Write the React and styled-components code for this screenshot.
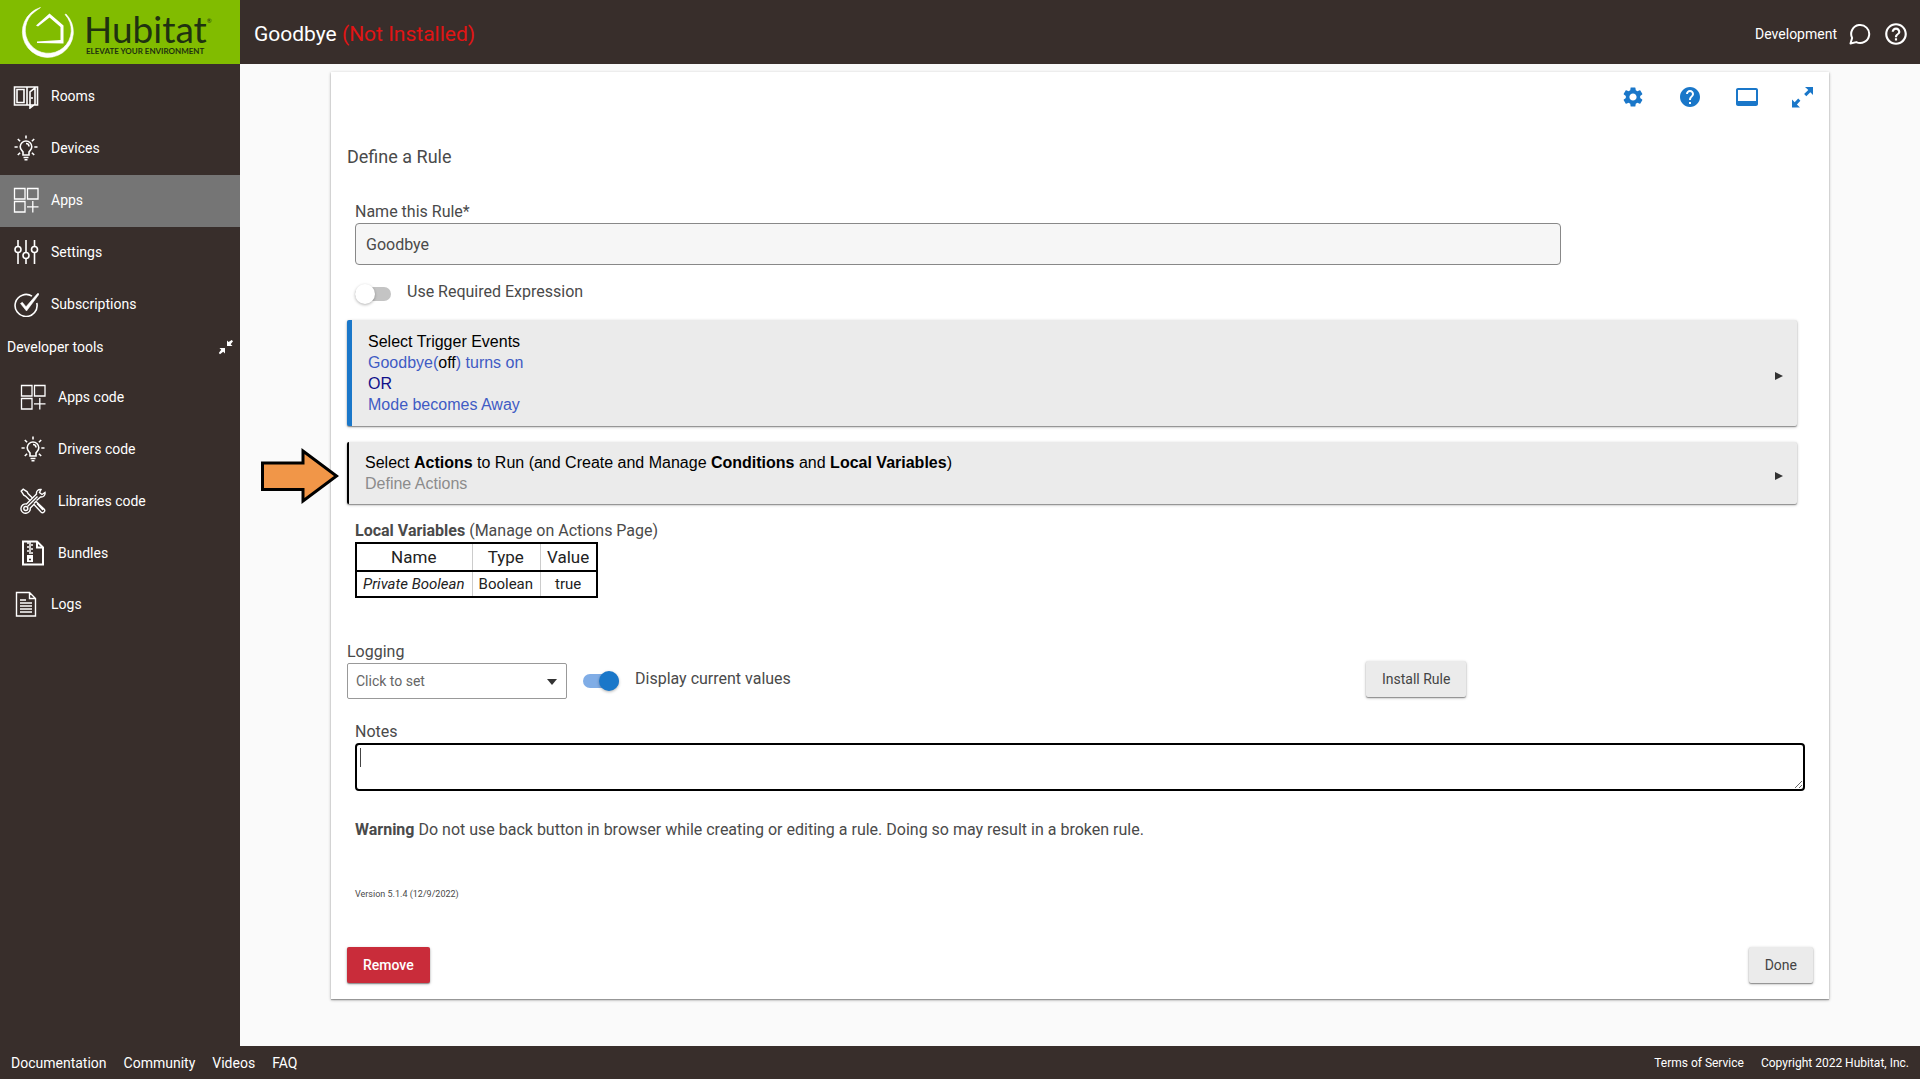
import { useState } from 'react'
import styled, { createGlobalStyle } from 'styled-components'
import { MdSettings, MdHelp, MdHelpOutline, MdVideoLabel } from 'react-icons/md'

const GlobalStyle = createGlobalStyle`
  * {
    box-sizing: border-box;
  }
  body {
    margin: 0;
    background: #fafafa;
    color: #4a4a4a;
    font-family: Roboto, 'Liberation Sans', sans-serif;
    font-size: 16px;
    line-height: 20px;
  }
  button, input, select, textarea {
    font-family: inherit;
    color: inherit;
  }
`

const Page = styled.div`
  display: flex;
  flex-direction: column;
  min-height: 100vh;
`

const Header = styled.header`
  display: flex;
  height: 64px;
  background: #382e2b;
  color: #fff;
`

const Logo = styled.a`
  display: flex;
  align-items: center;
  gap: 8px;
  width: 240px;
  padding-left: 20px;
  background: #81bc00;
  color: #1f3210;
  font-family: Lato, sans-serif;
  text-decoration: none;
`

const LogoText = styled.span`
  display: flex;
  flex-direction: column;
`

const LogoName = styled.span`
  font-size: 37px;
  line-height: 37px;
`

const LogoTagline = styled.span`
  padding-left: 2px;
  font-size: 8px;
  font-weight: 700;
  line-height: 8px;
  white-space: nowrap;
`

const Trademark = styled.sup`
  font-size: 6px;
  line-height: 0;
  vertical-align: 20px;
`

const HeaderBar = styled.div`
  display: flex;
  flex: 1;
  align-items: center;
  justify-content: space-between;
  padding: 3px 11px 0 14px;
`

const Title = styled.h1`
  margin: 0;
  font-size: 21px;
  font-weight: 400;
  line-height: 24px;
`

const NotInstalled = styled.span`
  color: #e11414;
`

const HeaderTools = styled.div`
  display: flex;
  align-items: center;
  gap: 12px;
  font-size: 14px;
`

const IconButton = styled.button`
  display: flex;
  padding: 0;
  border: 0;
  background: none;
  color: ${props => props.$color || '#fff'};
  cursor: pointer;
`

const Body = styled.div`
  display: flex;
  flex: 1;
`

const Sidebar = styled.nav`
  width: 240px;
  padding-top: 7px;
  background: #382e2b;
  color: #fff;
`

const NavItem = styled.a`
  display: flex;
  align-items: center;
  gap: 12px;
  height: 52px;
  padding: ${props => (props.$nested ? '0 0 0 20px' : '0 0 2px 13px')};
  background: ${props => (props.$active ? '#757575' : 'none')};
  color: #fff;
  font-size: 14px;
  text-decoration: none;
`

const NavGroup = styled.button`
  display: flex;
  align-items: center;
  justify-content: space-between;
  width: 100%;
  height: 40px;
  padding: 0 6px 8px 7px;
  border: 0;
  background: none;
  font-size: 14px;
`

const Main = styled.main`
  flex: 1;
  padding: 8px 91px 0;
`

const Card = styled.section`
  position: relative;
  padding: 12px 16px 16px;
  background: #fff;
  box-shadow: 0 1px 3px rgba(0, 0, 0, 0.3), 0 1px 1px rgba(0, 0, 0, 0.25);
`

const Arrow = styled.svg`
  position: absolute;
  right: calc(100% + 9px);
  top: 5px;
`

const CardTools = styled.div`
  display: flex;
  justify-content: flex-end;
  align-items: center;
  gap: 33px;
  height: 26px;
`

const Heading = styled.h2`
  margin: 35px 0 32px;
  font-size: 18px;
  font-weight: 400;
  line-height: 24px;
`

const Inset = styled.div`
  padding: 0 8px;
`

const Label = styled.label`
  display: block;
  line-height: 22px;
`

const NameField = styled.div`
  width: calc(100% * 10 / 12);
  padding: 0 8px;
`

const TextInput = styled.input`
  display: block;
  width: 100%;
  height: 42px;
  padding: 0 10px;
  border: 1px solid #888;
  border-radius: 4px;
  background: #f6f6f6;
  font-size: 16px;
`

const RequiredRow = styled.div`
  padding: 17px 8px 18px;
`

const SwitchLabel = styled.label`
  display: flex;
  align-items: center;
  gap: 16px;
`

const Switch = styled.input`
  appearance: none;
  position: relative;
  width: 36px;
  height: 14px;
  margin: 4px 0 0;
  border-radius: 7px;
  background: ${props => (props.checked ? '#80ade6' : '#c4c4c4')};
  &::after {
    content: '';
    position: absolute;
    top: -3px;
    left: ${props => (props.checked ? '16px' : '0')};
    width: 20px;
    height: 20px;
    border-radius: 50%;
    background: ${props => (props.checked ? '#1a77c9' : '#fff')};
    box-shadow: 0 1px 3px rgba(0, 0, 0, 0.3);
  }
`

const Panel = styled.button`
  position: relative;
  display: flex;
  align-items: center;
  justify-content: space-between;
  width: calc(100% - 16px);
  margin-bottom: 16px;
  padding: ${props => (props.$filled ? '11px 13px 11px 16px' : '10px 13px 10px 16px')};
  border: 0;
  border-left: ${props => (props.$filled ? '5px solid #1a77c9' : '2px solid #000')};
  border-radius: 2px;
  background: #ebebeb;
  box-shadow: 0 1px 3px rgba(0, 0, 0, 0.3), 0 1px 1px rgba(0, 0, 0, 0.3);
  color: #000;
  font-family: 'Liberation Sans', Arial, sans-serif;
  font-size: 16px;
  line-height: 21px;
  text-align: left;
  cursor: pointer;
`

const PanelMark = styled.svg`
  margin-top: 6px;
`

const Tint = styled.span`
  color: ${props => props.$color};
`

const VariableTable = styled.table`
  border: 2px solid #000;
  border-collapse: collapse;
  color: #222;
  text-align: center;
  th {
    height: 28px;
    padding: 0 7px 0 6px;
    border-bottom: 2px solid #000;
    font-size: 17px;
    font-weight: 400;
  }
  td {
    height: 26px;
    padding: 0 7px 0 6px;
    font-size: 15px;
  }
  th + th, td + td {
    border-left: 1px solid #ccc;
  }
`

const OptionsRow = styled.div`
  display: grid;
  grid-template-columns: 220px 1fr 447px;
  align-items: end;
  column-gap: 16px;
  margin: 43px 0 22px;
`

const SelectBox = styled.div`
  position: relative;
  svg {
    position: absolute;
    right: 10px;
    top: 16px;
    pointer-events: none;
  }
`

const Select = styled.select`
  appearance: none;
  display: block;
  width: 100%;
  height: 36px;
  padding: 0 8px;
  border: 1px solid #999;
  border-radius: 2px;
  background: #fff;
  color: #666;
  font-size: 14px;
`

const OptionCell = styled.div`
  display: flex;
  align-items: center;
  height: 38px;
  margin-bottom: 1px;
`

const Button = styled.button`
  height: 36px;
  padding: 0 16px;
  border: 0;
  border-radius: 2px;
  background: ${props => (props.$danger ? '#c92c3a' : '#ebebeb')};
  box-shadow: 0 1px 3px rgba(0, 0, 0, 0.3), 0 1px 1px rgba(0, 0, 0, 0.3);
  color: ${props => (props.$danger ? '#fff' : '#444')};
  font-size: 14px;
  font-weight: ${props => (props.$danger ? 500 : 400)};
  cursor: pointer;
`

const NotesBox = styled.div`
  position: relative;
`

const Notes = styled.textarea`
  display: block;
  width: 100%;
  height: 48px;
  padding: 3px;
  border: 2px solid #000;
  border-radius: 4px;
  outline: 0;
  background: #fff;
  caret-color: transparent;
  font-size: 16px;
`

const Caret = styled.span`
  position: absolute;
  top: 5px;
  left: 5px;
  width: 1px;
  height: 19px;
  background: #444;
`

const Warning = styled.p`
  margin: 29px 0 44px;
`

const Version = styled.p`
  margin: 0;
  font-size: 9px;
`

const Actions = styled.div`
  display: flex;
  justify-content: space-between;
  margin-top: 43px;
`

const Footer = styled.footer`
  display: flex;
  justify-content: space-between;
  align-items: center;
  height: 33px;
  padding: 0 11px;
  background: #382e2b;
`

const FooterLinks = styled.div`
  display: flex;
  gap: 17px;
  font-size: ${props => (props.$small ? '12px' : '14px')};
  color: #fff;
  a {
    color: inherit;
    text-decoration: none;
  }
`

function Icon({ children, size = 26, width = 1.6 }) {
  return (
    <svg width={size} height={size} viewBox="0 0 26 26" fill="none" stroke="currentColor" strokeWidth={width} aria-hidden="true">
      {children}
    </svg>
  )
}

function LogoMark() {
  return (
    <svg width="56" height="56" viewBox="0 0 56 56" fill="#fff" aria-hidden="true">
      <path d="M20.500 3.500 A25.500 25.500 0 1 0 46 10 L45 10.500 A23 23 0 1 1 15 7.500 Z" stroke="#fff" strokeWidth="0.600" />
      <path d="M16 21.500 L29.500 9.500 L43.500 21.500 V39.500 L17 39 V37.500 L40.500 36 V23 L29.500 13.500 L18 22.500 Z" />
    </svg>
  )
}

function RoomsIcon() {
  return (
    <Icon>
      <path d="M1.500 4h23v18h-23zM4 6.500h7v13H4zM14 4v18M17 22V9l5-4v16l-5 4z" />
      <path d="M19 14v2" />
    </Icon>
  )
}

function BulbIcon() {
  return (
    <Icon>
      <path d="M10 20v-3c-1-1.500-2.800-2.700-2.800-5.200a5.800 5.800 0 0 1 11.600 0c0 2.500-1.800 3.700-2.800 5.200v3zM10.500 22.500h5M11.500 24.800h3M13 8.500a3 3 0 0 1 3 3" />
      <path d="M13 .5v3M1.500 12h3.200M21.300 12h3.200M4.800 4l2.300 2.300M21.200 4l-2.300 2.300M4.800 20l2.300-2.300M21.200 20l-2.300-2.300" />
    </Icon>
  )
}

function AppsIcon() {
  return (
    <Icon width={1.3}>
      <path d="M1.500 1.500h10.500v10.500H1.500zM14.500 1.500H25v10.500H14.500zM1.500 14.500h10.500V25H1.500zM19.800 14v11.500M14 19.800h11.500" />
    </Icon>
  )
}

function SettingsIcon() {
  return (
    <Icon>
      <path d="M5 1v6.500M5 13.500V25M13 1v12.500M13 19.500V25M21.500 1v6.500M21.500 13.500V25" />
      <circle cx="5" cy="10.500" r="3" />
      <circle cx="13" cy="16.500" r="3" />
      <circle cx="21.500" cy="10.500" r="3" />
    </Icon>
  )
}

function CheckIcon() {
  return (
    <Icon>
      <path d="M19 5.200A11 11 0 1 0 23.800 12" />
      <path d="M7.500 12.500l1.800-1.200 3.700 4.500L24.500 2.500l1.800.3L13.500 20z" fill="currentColor" strokeWidth="0.600" />
    </Icon>
  )
}

function ToolsIcon() {
  return (
    <Icon width={1.4}>
      <path d="M16.500 12.500l4-3.500c3 .5 5-2 4.500-4.500l-3 2-2.500-2 1.500-3c-3-.5-5 2-4.500 4.500L6.500 16a4.700 4.700 0 1 0 3.800 4l4-4" />
      <circle cx="5.800" cy="20.500" r="2" />
      <path d="M10 12.500L5.500 8 3.800 7.200 1.200 3.200 3.200 1.200l4 2.600L8 5.500l4.500 4.500M14 15.500l2-2 8 7.500c2 2-1 5-3 3l-7-7.500M17 15.500l6 6.500M7.500 18.500l10-10" />
    </Icon>
  )
}

function BundleIcon() {
  return (
    <Icon width={2}>
      <path d="M3 1.500h14l6 6V24.500H3z" />
      <path d="M17 1.500v6h6" />
      <path d="M7 3h4M9 5h4M7 7h4M9 9h4M7 11h4M9 13h4" strokeWidth="1.300" />
      <path d="M7 15h6v7H7z" fill="currentColor" stroke="none" />
      <path d="M9 19.500h2" stroke="#382e2b" strokeWidth="1.500" />
    </Icon>
  )
}

function LogsIcon() {
  return (
    <Icon width={1.4}>
      <path d="M3.500 1.500h13l6 6V25h-19zM16.500 1.500v6h6M7 9h6M7 12h12M7 15h12M7 18h12M7 21h12" />
    </Icon>
  )
}

function CollapseIcon() {
  return (
    <svg width="16" height="16" viewBox="0 0 16 16" fill="#fff" aria-hidden="true">
      <path d="M9 1.500l1.600 1.600L13.700 1 15 2.300l-2.300 3 1.800 1.700H9zM7 9v5.500l-1.800-1.700L2 15.200.8 14 3.200 10.800 1.500 9z" />
    </svg>
  )
}

function ExpandIcon() {
  return (
    <svg width="21" height="21" viewBox="0 0 21 21" fill="currentColor" aria-hidden="true">
      <path d="M13 0h8v8l-2.700-2.700-4 4-2.200-2.200 4.200-4.100zM0 20.500v-8l2.700 2.700 3.500-3.600 2.200 2.200-3.500 3.700L8 20.500z" />
    </svg>
  )
}

function ChatIcon() {
  return (
    <svg width="22" height="22" viewBox="0 0 22 22" fill="none" stroke="#fff" strokeWidth="2" strokeLinejoin="round" aria-hidden="true">
      <path d="M1.500 20.500l1.600-5.600a9 9 0 1 1 4.200 4.200z" />
    </svg>
  )
}

const mainLinks = [
  { name: 'Rooms', icon: <RoomsIcon /> },
  { name: 'Devices', icon: <BulbIcon /> },
  { name: 'Apps', icon: <AppsIcon />, active: true },
  { name: 'Settings', icon: <SettingsIcon /> },
  { name: 'Subscriptions', icon: <CheckIcon /> }
]

const developerLinks = [
  { name: 'Apps code', icon: <AppsIcon /> },
  { name: 'Drivers code', icon: <BulbIcon /> },
  { name: 'Libraries code', icon: <ToolsIcon /> },
  { name: 'Bundles', icon: <BundleIcon /> }
]

function Navigation() {
  const [open, setOpen] = useState(true)

  return (
    <Sidebar>
      {mainLinks.map(link => (
        <NavItem key={link.name} href="#" $active={link.active}>{link.icon}{link.name}</NavItem>
      ))}
      <NavGroup onClick={() => setOpen(!open)}>
        Developer tools
        <CollapseIcon />
      </NavGroup>
      {open && developerLinks.map(link => (
        <NavItem key={link.name} href="#" $nested>{link.icon}{link.name}</NavItem>
      ))}
      <NavItem href="#"><LogsIcon />Logs</NavItem>
    </Sidebar>
  )
}

function PanelCaret() {
  return (
    <PanelMark width="10" height="10" viewBox="0 0 10 10" fill="#333" aria-hidden="true">
      <path d="M1 1l8 4-8 4z" />
    </PanelMark>
  )
}

function RuleForm() {
  const [data, setData] = useState({
    name: 'Goodbye',
    required: false,
    logging: '',
    display: true,
    notes: ''
  })

  return (
    <Card>
      <CardTools>
        <IconButton $color="#1a77c9" aria-label="Settings"><MdSettings size={24} /></IconButton>
        <IconButton $color="#1a77c9" aria-label="Help"><MdHelp size={24} /></IconButton>
        <IconButton $color="#1a77c9" aria-label="Display"><MdVideoLabel size={24} /></IconButton>
        <IconButton $color="#1a77c9" aria-label="Expand"><ExpandIcon /></IconButton>
      </CardTools>
      <Heading>Define a Rule</Heading>
      <NameField>
        <Label htmlFor="name">Name this Rule*</Label>
        <TextInput id="name" value={data.name} onChange={(e) => setData({...data, name: e.target.value})} />
      </NameField>
      <RequiredRow>
        <SwitchLabel>
          <Switch type="checkbox" checked={data.required} onChange={(e) => setData({...data, required: e.target.checked})} />
          Use Required Expression
        </SwitchLabel>
      </RequiredRow>
      <Panel $filled>
        <span>
          Select Trigger Events<br />
          <Tint $color="#3f5bc4">Goodbye(<Tint $color="#000">off</Tint>) turns on</Tint><br />
          <Tint $color="#10108a">OR</Tint><br />
          <Tint $color="#3f5bc4">Mode becomes Away</Tint>
        </span>
        <PanelCaret />
      </Panel>
      <Panel>
        <Arrow width="80" height="58" viewBox="0 0 80 58" aria-hidden="true">
          <path d="M2.500 16H43V4L76.500 29 43 54V42.500H2.500z" fill="#f19648" stroke="#000" strokeWidth="3" />
        </Arrow>
        <span>
          Select <b>Actions</b> to Run (and Create and Manage <b>Conditions</b> and <b>Local Variables</b>)<br />
          <Tint $color="#8c8c8c">Define Actions</Tint>
        </span>
        <PanelCaret />
      </Panel>
      <Inset>
        <Label as="div"><b>Local Variables</b> (Manage on Actions Page)</Label>
        <VariableTable>
          <thead>
            <tr><th>Name</th><th>Type</th><th>Value</th></tr>
          </thead>
          <tbody>
            <tr><td><i>Private Boolean</i></td><td>Boolean</td><td>true</td></tr>
          </tbody>
        </VariableTable>
      </Inset>
      <OptionsRow>
        <div>
          <Label htmlFor="logging">Logging</Label>
          <SelectBox>
            <Select id="logging" value={data.logging} onChange={(e) => setData({...data, logging: e.target.value})}>
              <option value="">Click to set</option>
            </Select>
            <svg width="10" height="6" viewBox="0 0 10 6" fill="#333" aria-hidden="true"><path d="M0 0h10L5 6z" /></svg>
          </SelectBox>
        </div>
        <OptionCell>
          <SwitchLabel>
            <Switch type="checkbox" checked={data.display} onChange={(e) => setData({...data, display: e.target.checked})} />
            Display current values
          </SwitchLabel>
        </OptionCell>
        <OptionCell><Button>Install Rule</Button></OptionCell>
      </OptionsRow>
      <Inset>
        <Label htmlFor="notes">Notes</Label>
        <NotesBox>
          <Notes id="notes" value={data.notes} onChange={(e) => setData({...data, notes: e.target.value})} />
          <Caret />
        </NotesBox>
        <Warning><b>Warning</b> Do not use back button in browser while creating or editing a rule. Doing so may result in a broken rule.</Warning>
        <Version>Version 5.1.4 (12/9/2022)</Version>
      </Inset>
      <Actions>
        <Button $danger>Remove</Button>
        <Button>Done</Button>
      </Actions>
    </Card>
  )
}

export default function App() {
  return (
    <Page>
      <GlobalStyle />
      <Header>
        <Logo href="#">
          <LogoMark />
          <LogoText>
            <LogoName>Hubitat<Trademark>®</Trademark></LogoName>
            <LogoTagline>ELEVATE YOUR ENVIRONMENT</LogoTagline>
          </LogoText>
        </Logo>
        <HeaderBar>
          <Title>Goodbye <NotInstalled>(Not Installed)</NotInstalled></Title>
          <HeaderTools>
            Development
            <IconButton aria-label="Messages"><ChatIcon /></IconButton>
            <IconButton aria-label="Help"><MdHelpOutline size={26} /></IconButton>
          </HeaderTools>
        </HeaderBar>
      </Header>
      <Body>
        <Navigation />
        <Main>
          <RuleForm />
        </Main>
      </Body>
      <Footer>
        <FooterLinks>
          <a href="#">Documentation</a>
          <a href="#">Community</a>
          <a href="#">Videos</a>
          <a href="#">FAQ</a>
        </FooterLinks>
        <FooterLinks $small>
          <a href="#">Terms of Service</a>
          <span>Copyright 2022 Hubitat, Inc.</span>
        </FooterLinks>
      </Footer>
    </Page>
  )
}
